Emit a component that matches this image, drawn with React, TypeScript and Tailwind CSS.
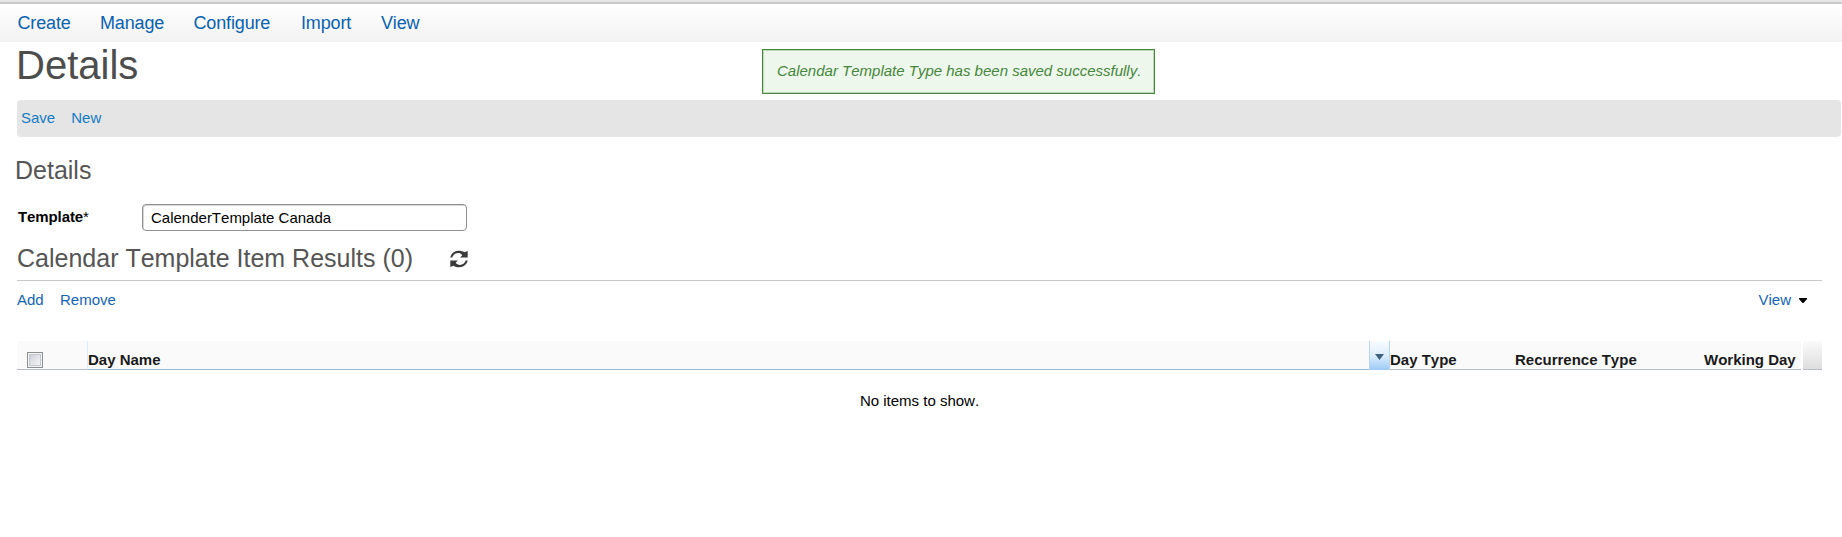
const menu = [
  { label: 'Create', width: 'w-[82.5px]' },
  { label: 'Manage', width: 'w-[93.5px]' },
  { label: 'Configure', width: 'w-[107.5px]' },
  { label: 'Import', width: 'w-[80px]' },
  { label: 'View', width: 'w-[60px]' },
];

function RefreshIcon() {
  return (
    <svg width="18" height="18" viewBox="0 0 18 18" fill="none">
      <path d="M0.300 7.400C1.200 3.400 4.200.8 8.800.8c2.300 0 4.100.5 5.600 1.500L17.700.9v6.600h-7.600l2.200-2.300C11.200 3.700 9.700 3.100 8.200 3.100 5.200 3.100 3.200 4.700 2.300 7.400z" fill="#3a3a3a" />
      <path d="M17.700 10.600c-.9 4-3.900 6.600-8.500 6.600-2.300 0-4.100-.5-5.600-1.500L.3 17.100v-6.600h7.600l-2.200 2.300c1.100 1.500 2.600 2.100 4.100 2.100 3 0 5-1.600 5.900-4.300z" fill="#3a3a3a" />
    </svg>
  );
}

function TopMenu() {
  return (
    <header>
      <div className="h-0.5 bg-[#e6e6e6]" />
      <div className="h-0.5 bg-[#cacaca]" />
      <nav className="flex h-[38px] items-center bg-linear-to-b from-white to-[#f2f2f2] pl-[17.5px] text-[18px] tracking-[-0.15px] text-[#0862b0]">
        {menu.map((m) => (
          <a key={m.label} className={m.width}>{m.label}</a>
        ))}
      </nav>
    </header>
  );
}

function TableHeader() {
  return (
    <div className="mt-[26px] flex h-[29px] text-[15px] leading-[18px] font-bold text-[#1a1a1a]">
      <div className="flex w-[70px] items-end border-b border-[#b8bcc6] bg-[#fafafa] pb-px pl-[10px]">
        <span className="flex size-4 items-center justify-center border border-[#8e8f8f] bg-[#f4f4f4]">
          <span className="size-3 border border-[#c3c7cf] bg-linear-to-br from-[#cdd2da] to-[#f6f6f6]" />
        </span>
      </div>
      <div className="flex w-[1282px] items-end border-b border-l border-b-[#9cb6d2] border-l-[#deebf9] bg-[#fafafa]">
        Day Name
      </div>
      <div className="flex w-[21px] justify-center border-x border-x-[#b7d6f3] bg-linear-to-b from-[#f8fcff] via-[#dceefd] to-[#9ccaf6]">
        <svg className="mt-[13px]" width="9" height="6" viewBox="0 0 9 6">
          <path d="M0 0h9L4.500 6z" fill="#41607f" />
        </svg>
      </div>
      <div className="flex w-[125px] items-end border-b border-[#b8bcc6] bg-[#fafafa]">Day Type</div>
      <div className="flex w-[189px] items-end border-b border-[#b8bcc6] bg-[#fafafa]">Recurrence Type</div>
      <div className="flex w-[97px] items-end border-b border-[#b8bcc6] bg-[#fafafa]">Working Day</div>
      <div className="ml-[2px] w-[19px] border-b border-[#b8bcc6] bg-linear-to-b from-[#fafafa] to-[#dedede]" />
    </div>
  );
}

export default function App() {
  return (
    <div className="relative h-[537px] w-[1842px] overflow-hidden bg-white font-['Liberation_Sans',Arial,sans-serif] text-[15px] text-black [font-kerning:none]">
      <TopMenu />
      <h1 className="h-[58px] pl-[16px] text-[40px] leading-[46px] text-[#4d4d4d]">Details</h1>
      <div role="status" className="absolute top-[49px] left-[762px] h-[45px] w-[393px] border border-[#46863c] bg-[#edf7eb] shadow-[inset_0_0_0_1px_#bdd9b8]">
        <p className="pl-[14px] leading-[42px] whitespace-nowrap text-[#46863c] italic">Calendar Template Type has been saved successfully.</p>
      </div>
      <div className="mr-px ml-[17px] flex h-[37px] items-center gap-4 rounded-[4px] bg-[#e5e5e5] pl-1 text-[#157cc4]">
        <a>Save</a>
        <a>New</a>
      </div>
      <main className="mr-5 ml-[17px]">
        <h2 className="-ml-[2px] pt-[18px] text-[25px] leading-[30px] text-[#555]">Details</h2>
        <div className="mt-[19px] flex h-[27px]">
          <label htmlFor="template" className="w-[125px] pl-px leading-[26px] font-bold tracking-[-0.1px]">
            Template<span className="font-normal">*</span>
          </label>
          <input id="template" defaultValue="CalenderTemplate Canada" className="h-[27px] w-[325px] rounded-[4px] border border-[#8f8f8f] bg-white pl-2 text-[15px] shadow-[inset_1px_1px_0_#d8d8d8]" />
        </div>
        <div className="flex h-[50px] items-start border-b border-[#c8c8c8] pt-3">
          <h2 className="w-[433px] text-[25px] leading-[30px] text-[#555]">Calendar Template Item Results (0)</h2>
          <div className="pt-[7px]"><RefreshIcon /></div>
        </div>
        <div className="flex h-[34px] items-center pt-1 text-[#1464b4]">
          <a className="w-[43px]">Add</a>
          <a>Remove</a>
          <a className="mr-2 ml-auto">View</a>
          <svg className="mr-[15px]" width="8" height="5" viewBox="0 0 8 5">
            <path d="M0 0h8v1L4.500 5h-1L0 1z" fill="#000" />
          </svg>
        </div>
        <TableHeader />
        <p className="mt-[22px] text-center leading-[18px]">No items to show.</p>
      </main>
    </div>
  );
}
